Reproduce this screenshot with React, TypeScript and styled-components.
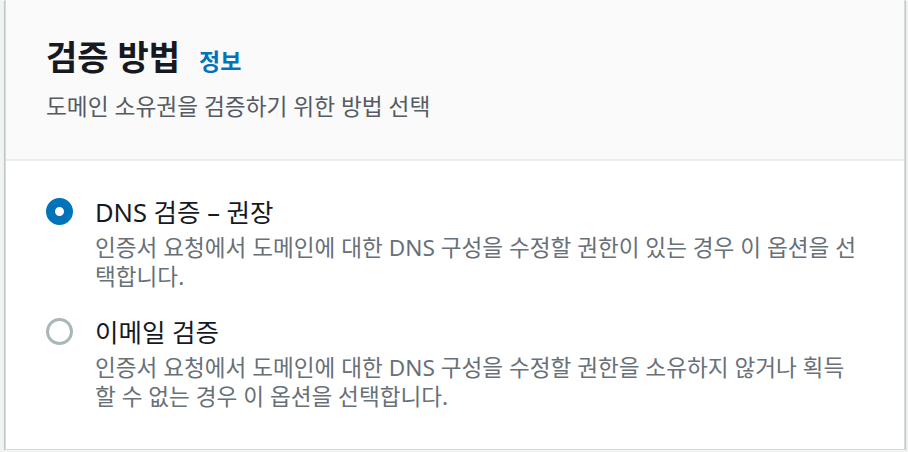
import styled, { createGlobalStyle } from 'styled-components'
import { useState } from 'react'

const GlobalStyle = createGlobalStyle`
  html, body {
    margin: 0;
    padding: 0;
    background: #f2f3f3;
    font-family: "Noto Sans", "Noto Sans CJK KR", sans-serif;
  }
`

interface Option {
  id: string
  label: string
  description: string
}

const OPTIONS: Option[] = [
  {
    id: 'dns',
    label: 'DNS 검증 – 권장',
    description:
      '인증서 요청에서 도메인에 대한 DNS 구성을 수정할 권한이 있는 경우 이 옵션을 선택합니다.',
  },
  {
    id: 'email',
    label: '이메일 검증',
    description:
      '인증서 요청에서 도메인에 대한 DNS 구성을 수정할 권한을 소유하지 않거나 획득할 수 없는 경우 이 옵션을 선택합니다.',
  },
]

export default function App() {
  const [selected, setSelected] = useState('dns')

  return (
    <>
      <GlobalStyle />
      <Page>
        <Container>
          <Header>
            <TitleRow>
              <Title>검증 방법</Title>
              <InfoLink href="#">정보</InfoLink>
            </TitleRow>
            <HeaderDescription>도메인 소유권을 검증하기 위한 방법 선택</HeaderDescription>
          </Header>
          <Body>
            <RadioGroup>
              {OPTIONS.map((option) => (
                <RadioItem key={option.id} onClick={() => setSelected(option.id)}>
                  <RadioControl checked={selected === option.id} />
                  <RadioText>
                    <RadioLabel>{option.label}</RadioLabel>
                    <RadioDescription>{option.description}</RadioDescription>
                  </RadioText>
                </RadioItem>
              ))}
            </RadioGroup>
          </Body>
        </Container>
      </Page>
    </>
  )
}

const Page = styled.div`
  padding: 0 3px 0 5px;
`

const Container = styled.div`
  width: 900px;
  background: #ffffff;
  border: 1px solid #d5dbdb;
  border-top: none;
  box-shadow: 0 1px 1px 0 rgba(0, 28, 36, 0.3), 1px 1px 1px 0 rgba(0, 28, 36, 0.15),
    -1px 1px 1px 0 rgba(0, 28, 36, 0.15);
  box-sizing: border-box;
`

const Header = styled.div`
  background: #fafafa;
  border-bottom: 2px solid #eaeded;
  padding: 35px 40px 37px;
`

const TitleRow = styled.div`
  display: flex;
  align-items: baseline;
  gap: 19px;
`

const Title = styled.h2`
  margin: 0;
  font-size: 34px;
  line-height: 44px;
  font-weight: 700;
  color: #16191f;
`

const InfoLink = styled.a`
  font-size: 23px;
  font-weight: 700;
  color: #0073bb;
  text-decoration: none;
`

const HeaderDescription = styled.p`
  margin: 13px 0 0;
  font-size: 22.7px;
  line-height: 30px;
  color: #545b64;
`

const Body = styled.div`
  padding: 34px 40px 38px;
`

const RadioGroup = styled.div`
  display: flex;
  flex-direction: column;
  gap: 24px;
`

const RadioItem = styled.label`
  display: flex;
  align-items: flex-start;
  gap: 22px;
  cursor: pointer;
`

const RadioControl = styled.span<{ checked: boolean }>`
  flex: none;
  box-sizing: border-box;
  width: 27px;
  height: 27px;
  margin-top: 3px;
  border-radius: 50%;
  background: #ffffff;
  border: ${(p) => (p.checked ? '9.5px solid #0073bb' : '3px solid #aab7b8')};
`

const RadioText = styled.div`
  display: flex;
  flex-direction: column;
  min-width: 0;
`

const RadioLabel = styled.span`
  font-size: 25.5px;
  line-height: 34px;
  color: #16191f;
`

const RadioDescription = styled.span`
  margin-top: 4px;
  font-size: 22.6px;
  line-height: 29px;
  color: #687078;
`
